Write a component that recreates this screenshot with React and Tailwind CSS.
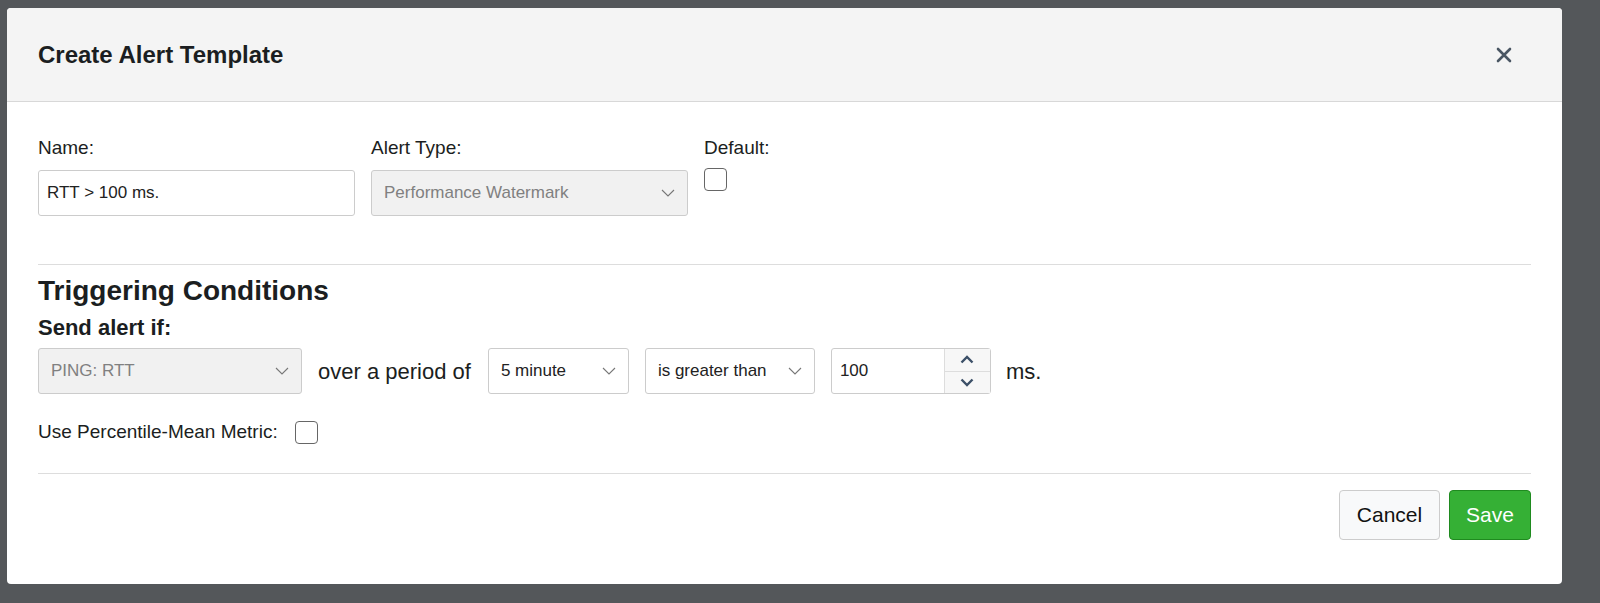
import React from "react";

const Chev = () => (
  <svg width="14" height="8" viewBox="0 0 14 8" fill="none" stroke="#777" strokeWidth="1.1"><path d="M1 1l6 6 6-6" /></svg>
);

function Select({ text, w, disabled }) {
  return (
    <div className={`flex items-center justify-between h-[46px] px-3 border border-[#ccc] rounded-[3px] text-[17px] ${disabled ? "bg-[#f1f1f1] text-[#808080]" : "bg-white text-[#222]"} ${w}`}>
      <span>{text}</span>
      <Chev />
    </div>
  );
}

export default function App() {
  return (
    <div className="w-[1600px] h-[603px] bg-[#54575a] pt-[8px] pl-[7px]" style={{ fontFamily: '"Liberation Sans", Arial, sans-serif' }}>
      <div className="w-[1555px] h-[576px] bg-white rounded-[4px] overflow-hidden text-[#1b1e21]">
        <div className="h-[94px] bg-[#f4f4f4] border-b border-[#d8d8d8] flex items-center justify-between pl-[31px] pr-[50px]">
          <div className="text-[24px] font-bold">Create Alert Template</div>
          <svg width="16" height="16" viewBox="0 0 16 16" stroke="#4a5663" strokeWidth="2.6" strokeLinecap="round"><path d="M2 2l12 12M14 2L2 14" /></svg>
        </div>
        <div className="px-[31px]">
          <div className="flex gap-[16px] pt-[34px] pb-[48px]">
            <div>
              <div className="text-[19px] leading-[24px] mb-[10px]">Name:</div>
              <div className="w-[317px] h-[46px] border border-[#ccc] rounded-[3px] flex items-center px-[8px] text-[17px] text-[#222]">RTT &gt; 100 ms.</div>
            </div>
            <div>
              <div className="text-[19px] leading-[24px] mb-[10px]">Alert Type:</div>
              <Select text="Performance Watermark" w="w-[317px]" disabled />
            </div>
            <div>
              <div className="text-[19px] leading-[24px] mb-[8px]">Default:</div>
              <div className="w-[23px] h-[23px] border border-[#666] rounded-[4px] bg-white" />
            </div>
          </div>
          <div className="border-t border-[#ddd]" />
          <div className="text-[28px] leading-[34px] font-bold mt-[9px]">Triggering Conditions</div>
          <div className="text-[22px] leading-[28px] font-bold mt-[6px]">Send alert if:</div>
          <div className="flex items-center mt-[6px] text-[22px]">
            <Select text="PING: RTT" w="w-[264px]" disabled />
            <span className="ml-[16px] mr-[17px]">over a period of</span>
            <Select text="5 minute" w="w-[141px]" />
            <div className="w-[16px]" />
            <Select text="is greater than" w="w-[170px]" />
            <div className="w-[16px]" />
            <div className="w-[160px] h-[46px] border border-[#ccc] rounded-[3px] flex text-[17px]">
              <div className="flex-1 flex items-center px-[8px] text-[#222]">100</div>
              <div className="w-[46px] border-l border-[#ddd] bg-[#f7f7f7] flex flex-col">
                <div className="flex-1 flex items-center justify-center border-b border-[#ddd]">
                  <svg width="14" height="9" viewBox="0 0 14 9" fill="none" stroke="#3c5068" strokeWidth="2.4"><path d="M1.5 7.5l5.5-5.5 5.5 5.5" /></svg>
                </div>
                <div className="flex-1 flex items-center justify-center">
                  <svg width="14" height="9" viewBox="0 0 14 9" fill="none" stroke="#3c5068" strokeWidth="2.4"><path d="M1.5 1.5l5.5 5.5 5.5-5.5" /></svg>
                </div>
              </div>
            </div>
            <span className="ml-[15px]">ms.</span>
          </div>
          <div className="flex items-center mt-[24px] text-[19px]">
            <span>Use Percentile-Mean Metric:</span>
            <div className="ml-[17px] w-[23px] h-[23px] border border-[#666] rounded-[4px] bg-white" />
          </div>
          <div className="border-t border-[#ddd] mt-[26px]" />
          <div className="flex justify-end gap-[9px] mt-[16px]">
            <div className="w-[101px] h-[50px] border border-[#ccc] rounded-[4px] bg-[#f8f9fa] flex items-center justify-center text-[21px] text-[#111]">Cancel</div>
            <div className="w-[82px] h-[50px] border border-[#1f8a1f] rounded-[4px] bg-[#35b035] flex items-center justify-center text-[21px] text-white">Save</div>
          </div>
        </div>
      </div>
    </div>
  );
}
